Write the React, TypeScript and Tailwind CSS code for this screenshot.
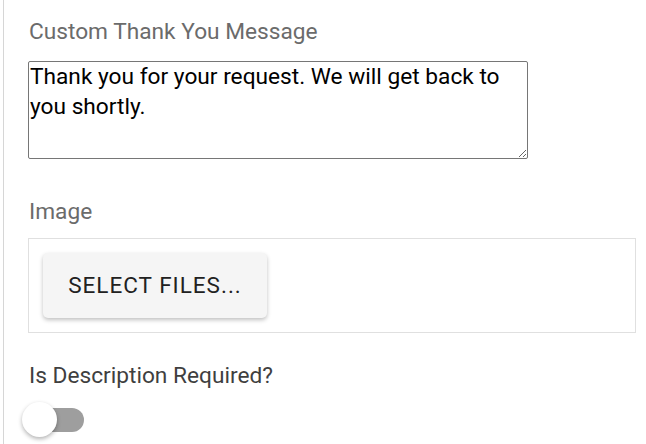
import { useState } from "react";

export default function App() {
  const [required, setRequired] = useState(false);

  return (
    <div className="min-h-[444px] w-[646px] bg-white font-['Roboto',sans-serif]">
      <div className="ml-[3px] min-h-[444px] border-l border-[#d6d6d6] pl-[24px] pt-[18px]">
        <label className="block pl-[1px] text-[22.7px] leading-[28px] text-[#6b6b6b]">Custom Thank You Message</label>
        <textarea
          className="mt-[15px] block h-[98px] w-[500px] rounded-[2px] border border-[#767676] px-[1px] py-0 text-[22.7px] leading-[30px] text-black outline-none"
          defaultValue="Thank you for your request. We will get back to you shortly."
        />

        <label className="mt-[39px] block pl-[1px] text-[22.7px] leading-[28px] text-[#6b6b6b]">Image</label>
        <div className="mt-[12px] w-[608px] border border-[#e0e0e0] px-[14px] py-[14px]">
          <button className="flex h-[65px] w-[224px] items-center justify-center rounded-[5px] bg-[#f5f5f5] text-[22.5px] tracking-[1px] text-[#212121] shadow-[0_2px_4px_rgba(0,0,0,0.25)]">
            SELECT FILES...
          </button>
        </div>

        <label className="mt-[29px] block pl-[1px] text-[22.7px] leading-[28px] text-[#3f3f3f]">Is Description Required?</label>
        <button
          onClick={() => setRequired(!required)}
          className="relative -ml-[6px] mt-[12px] block h-[36px] w-[64px]"
        >
          <span className="absolute left-[18px] top-[6px] h-[24px] w-[44px] rounded-full bg-[#9e9e9e]" />
          <span className="absolute left-0 top-0 h-[35px] w-[35px] rounded-full bg-white shadow-[0_2px_4px_rgba(0,0,0,0.3)]" />
        </button>
      </div>
    </div>
  );
}
